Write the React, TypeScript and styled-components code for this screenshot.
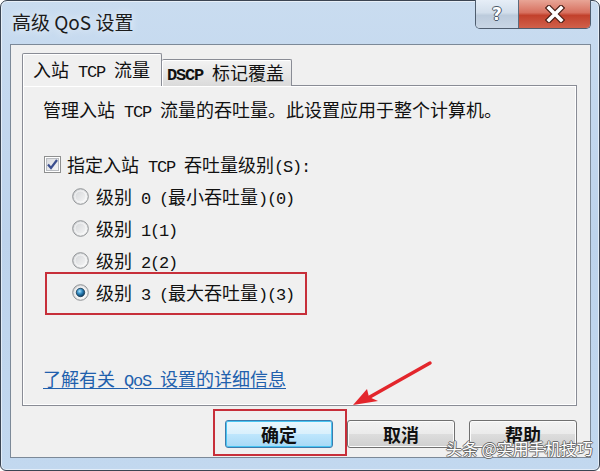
import React from 'react';
import styled, { createGlobalStyle } from 'styled-components';

const GlobalStyle = createGlobalStyle`
  html, body {
    margin: 0;
    padding: 0;
    background: #ffffff;
  }
`;

const Page = styled.div`
  position: relative;
  width: 600px;
  height: 471px;
  overflow: hidden;
  font-family: 'Noto Sans CJK SC', sans-serif;
`;

const Window = styled.div`
  box-sizing: border-box;
  height: 471px;
  border: 1px solid #3b4553;
  border-radius: 7px 7px 6px 6px;
  background: linear-gradient(180deg, #c9dcf0 0%, #bdd3ec 50%, #c2d8ef 100%);
  box-shadow: inset 0 0 0 1px rgba(255, 255, 255, 0.55);
  display: flex;
  flex-direction: column;
  padding: 0 8px 12px 9px;
`;

const TitleBar = styled.div`
  height: 43px;
  display: flex;
  align-items: flex-start;
  flex-shrink: 0;
`;

const Title = styled.div`
  margin: 10px 0 0 2px;
  font-family: 'Noto Sans CJK SC', sans-serif;
  font-size: 19px;
  line-height: 22px;
  color: #1b1b1b;
  text-shadow: 0 0 8px rgba(255, 255, 255, 0.9);
`;

const Caption = styled.div`
  margin: -1px 0 0 auto;
  display: flex;
  border: 1px solid #4f5d6e;
  border-top: none;
  border-radius: 0 0 5px 5px;
  overflow: hidden;
`;

const CapButton = styled.div<{ $close?: boolean; $w: number }>`
  width: ${(p) => p.$w}px;
  height: 28px;
  display: flex;
  align-items: center;
  justify-content: center;
  background: ${(p) =>
    p.$close
      ? 'linear-gradient(180deg, #e8a596 0%, #d7705f 45%, #c2412c 55%, #d0604a 100%)'
      : 'linear-gradient(180deg, #e6eef7 0%, #d2deeb 45%, #bccbdc 55%, #c9d6e5 100%)'};
  & + & {
    border-left: 1px solid #5c6b7c;
  }
`;

const HelpGlyph = styled.span`
  font-family: 'DejaVu Sans', sans-serif;
  font-weight: bold;
  font-size: 17px;
  color: #ffffff;
  text-shadow: -1px 0 #4a5868, 1px 0 #4a5868, 0 -1px #4a5868, 0 1px #4a5868;
`;

const Client = styled.div`
  flex: 1;
  display: flex;
  flex-direction: column;
  border: 1px solid #7c8998;
  background: #f0f0f0;
  padding: 8px 13px 9px 11px;
`;

const TabRow = styled.div`
  display: flex;
  align-items: flex-end;
  height: 33px;
  flex-shrink: 0;
`;

const Tab = styled.div<{ $active?: boolean }>`
  box-sizing: border-box;
  position: relative;
  z-index: ${(p) => (p.$active ? 2 : 1)};
  width: ${(p) => (p.$active ? 140 : 130)}px;
  height: ${(p) => (p.$active ? 33 : 27)}px;
  border: 1px solid #898c95;
  border-bottom: none;
  ${(p) => (p.$active ? '' : 'border-left: none;')}
  border-radius: 2px 2px 0 0;
  background: ${(p) =>
    p.$active ? '#f0f0f0' : 'linear-gradient(180deg, #f3f3f3 0%, #e8e8e8 50%, #dadada 100%)'};
  box-shadow: inset 1px 1px 0 #ffffff;
  padding-left: ${(p) => (p.$active ? 10 : 5)}px;
  font-size: 18px;
  line-height: ${(p) => (p.$active ? 31 : 25)}px;
  color: #111;
  white-space: nowrap;
`;

const Panel = styled.div`
  flex: 1;
  margin-top: -1px;
  border: 1px solid #898c95;
  box-shadow: inset 1px 1px 0 #ffffff, inset -1px -1px 0 #ffffff;
  display: flex;
  flex-direction: column;
  padding: 12px 20px 15px 20px;
`;

const Line = styled.div`
  font-size: 18px;
  line-height: 22px;
  color: #111;
  white-space: nowrap;
`;

const Latin = styled.span<{ $bold?: boolean }>`
  font-family: 'Liberation Mono', monospace;
  font-size: 17px;
  line-height: 1;
  letter-spacing: -1.2px;
  font-weight: ${(p) => (p.$bold ? 'bold' : 'normal')};
`;

const CheckRow = styled.div`
  margin-top: 27px;
  height: 32px;
  display: flex;
  align-items: center;
  gap: 6px;
  padding-left: 1px;
`;

const RadioRow = styled.div`
  height: 32px;
  display: flex;
  align-items: center;
  gap: 7px;
  padding-left: 29px;
`;

const Label = styled.span`
  font-size: 18px;
  line-height: 22px;
  color: #111;
  white-space: nowrap;
`;

const Link = styled.a`
  margin-top: auto;
  font-size: 18px;
  line-height: 22px;
  color: #2160ad;
  text-decoration: underline;
  text-underline-offset: 2px;
  white-space: nowrap;
  cursor: pointer;
`;

const ButtonRow = styled.div`
  margin-top: 14px;
  display: flex;
  justify-content: flex-end;
  gap: 14px;
  flex-shrink: 0;
`;

const Button = styled.div<{ $focus?: boolean }>`
  box-sizing: border-box;
  width: 108px;
  height: 28px;
  border-radius: 3px;
  border: 1px solid ${(p) => (p.$focus ? '#3d7bad' : '#707070')};
  background: ${(p) =>
    p.$focus
      ? 'linear-gradient(180deg, #eaf6fd 0%, #d9f0fc 50%, #bee6fd 51%, #a7d9f5 100%)'
      : 'linear-gradient(180deg, #f2f2f2 0%, #ebebeb 50%, #dddddd 51%, #cfcfcf 100%)'};
  box-shadow: inset 0 0 0 1px ${(p) => (p.$focus ? '#48c5f2' : '#fcfcfc')};
  display: flex;
  align-items: center;
  justify-content: center;
  font-family: 'Noto Sans CJK SC', sans-serif;
  font-weight: bold;
  font-size: 18px;
  color: #111;
`;

const Mark = styled.div`
  position: absolute;
  border: 2px solid #c72f3a;
  pointer-events: none;
`;

const ArrowSvg = styled.svg`
  position: absolute;
  left: 340px;
  top: 355px;
  pointer-events: none;
`;

const Watermark = styled.div`
  position: absolute;
  left: 446px;
  top: 437px;
  font-family: 'Noto Sans CJK SC', sans-serif;
  font-size: 16px;
  line-height: 22px;
  color: #ffffff;
  text-shadow: -1px 0 #6b6b6b, 1px 0 #6b6b6b, 0 -1px #6b6b6b, 0 1px #6b6b6b;
  white-space: nowrap;
`;

// ASCII runs use a narrower mono face, like SimSun's half-width letters
const Mixed = ({ text, bold }: { text: string; bold?: boolean }) => (
  <>
    {text.split(/([\x20-\x7e]+)/).map((part, i) =>
      /^[\x20-\x7e]+$/.test(part) ? (
        <Latin key={i} $bold={bold}>
          {part}
        </Latin>
      ) : (
        part
      ),
    )}
  </>
);

const CheckBox = () => (
  <svg width="17" height="17" viewBox="0 0 17 17">
    <defs>
      <linearGradient id="cbg" x1="0" y1="0" x2="1" y2="1">
        <stop offset="0" stopColor="#d9dbdf" />
        <stop offset="1" stopColor="#f7f7f7" />
      </linearGradient>
    </defs>
    <rect x="0.5" y="0.5" width="16" height="16" fill="#ffffff" stroke="#8e8f8f" />
    <rect x="2.5" y="2.5" width="12" height="12" fill="url(#cbg)" stroke="#b9bcc1" />
    <path d="M4 8.5 L7 12 L13 4" fill="none" stroke="#3c4f8f" strokeWidth="2.2" />
  </svg>
);

const Radio = ({ checked }: { checked?: boolean }) => (
  <svg width="17" height="17" viewBox="0 0 17 17">
    <defs>
      <linearGradient id="rbg" x1="0" y1="0" x2="1" y2="1">
        <stop offset="0" stopColor="#cfd1d4" />
        <stop offset="1" stopColor="#fbfbfb" />
      </linearGradient>
      <radialGradient id="rdot" cx="0.4" cy="0.35" r="0.65">
        <stop offset="0" stopColor="#a9e2ff" />
        <stop offset="0.5" stopColor="#2d86bd" />
        <stop offset="1" stopColor="#0d3b61" />
      </radialGradient>
    </defs>
    <circle cx="8.5" cy="8.5" r="7.8" fill="url(#rbg)" stroke="#8d9093" strokeWidth="1" />
    <circle cx="8.5" cy="8.5" r="5.6" fill="none" stroke="#ffffff" strokeWidth="1" opacity="0.7" />
    {checked && <circle cx="8.5" cy="8.5" r="4.2" fill="url(#rdot)" stroke="#1c3d57" strokeWidth="0.8" />}
  </svg>
);

const CloseX = () => (
  <svg width="22" height="18" viewBox="0 0 22 18">
    <path d="M5 3 L17 15 M17 3 L5 15" stroke="#4b2018" strokeWidth="6" strokeLinecap="square" />
    <path d="M5 3 L17 15 M17 3 L5 15" stroke="#ffffff" strokeWidth="3.6" strokeLinecap="square" />
  </svg>
);

const levels = [
  { text: '级别 0 (最小吞吐量)(0)' },
  { text: '级别 1(1)' },
  { text: '级别 2(2)' },
  { text: '级别 3 (最大吞吐量)(3)', checked: true },
];

export default function App() {
  return (
    <Page>
      <GlobalStyle />
      <Window>
        <TitleBar>
          <Title>高级 QoS 设置</Title>
          <Caption>
            <CapButton $w={42}>
              <HelpGlyph>?</HelpGlyph>
            </CapButton>
            <CapButton $w={71} $close>
              <CloseX />
            </CapButton>
          </Caption>
        </TitleBar>
        <Client>
          <TabRow>
            <Tab $active>
              <Mixed text="入站 TCP 流量" />
            </Tab>
            <Tab>
              <Mixed text="DSCP 标记覆盖" bold />
            </Tab>
          </TabRow>
          <Panel>
            <Line>
              <Mixed text="管理入站 TCP 流量的吞吐量。此设置应用于整个计算机。" />
            </Line>
            <CheckRow>
              <CheckBox />
              <Label>
                <Mixed text="指定入站 TCP 吞吐量级别(S):" />
              </Label>
            </CheckRow>
            {levels.map((l) => (
              <RadioRow key={l.text}>
                <Radio checked={l.checked} />
                <Label>
                  <Mixed text={l.text} />
                </Label>
              </RadioRow>
            ))}
            <Link>
              <Mixed text="了解有关 QoS 设置的详细信息" />
            </Link>
          </Panel>
          <ButtonRow>
            <Button $focus>确定</Button>
            <Button>取消</Button>
            <Button>帮助</Button>
          </ButtonRow>
        </Client>
      </Window>

      <Mark style={{ left: 45, top: 272, width: 258, height: 39 }} />
      <Mark style={{ left: 213, top: 409, width: 130, height: 43 }} />
      <ArrowSvg width="100" height="60" viewBox="0 0 100 60">
        <path d="M90 8 L28 43" stroke="#e3262c" strokeWidth="3.5" strokeLinecap="round" />
        <path d="M13 50 L27 34 L29 42 L38 46 Z" fill="#e3262c" />
      </ArrowSvg>
      <Watermark>头条 @实用手机技巧</Watermark>
    </Page>
  );
}
